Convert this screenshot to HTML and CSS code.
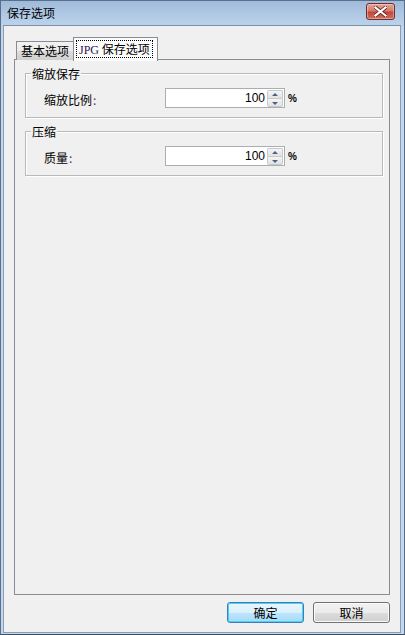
FILE: index.html
```html
<!DOCTYPE html>
<html lang="zh">
<head>
<meta charset="utf-8">
<title>保存选项</title>
<link rel="stylesheet" href="styles.css">
</head>
<body>
<div class="window">
  <div class="titlebar">
    <span class="title">保存选项</span>
    <button class="close" aria-label="关闭">
      <svg width="13" height="11" viewBox="0 0 13 11"><path d="M1.5 1.5 L11.5 9.5 M11.5 1.5 L1.5 9.5" stroke="#5a1a1a" stroke-width="3.6" stroke-linecap="square"/><path d="M1.5 1.5 L11.5 9.5 M11.5 1.5 L1.5 9.5" stroke="#fff" stroke-width="2.2" stroke-linecap="square"/></svg>
    </button>
  </div>
  <div class="body">
    <div class="tabs">
      <div class="tab">基本选项</div>
      <div class="tab active"><span class="focus"><span class="latin">JPG</span> 保存选项</span></div>
    </div>
    <div class="panel">
      <div class="group">
        <span class="legend">缩放保存</span>
        <div class="row">
          <span class="label">缩放比例<span class="colon">:</span></span>
          <div class="spin">
            <span class="value">100</span>
            <span class="arrows"><span class="up"></span><span class="down"></span></span>
          </div>
          <span class="pct">%</span>
        </div>
      </div>
      <div class="group">
        <span class="legend">压缩</span>
        <div class="row">
          <span class="label">质量<span class="colon">:</span></span>
          <div class="spin">
            <span class="value">100</span>
            <span class="arrows"><span class="up"></span><span class="down"></span></span>
          </div>
          <span class="pct">%</span>
        </div>
      </div>
    </div>
    <div class="buttons">
      <button class="btn default">确定</button>
      <button class="btn">取消</button>
    </div>
  </div>
</div>
</body>
</html>
```

FILE: styles.css
```css
* { box-sizing: border-box; }
html, body { margin: 0; padding: 0; }
body {
  width: 405px;
  height: 635px;
  font-family: "Noto Sans CJK SC", "DejaVu Sans", sans-serif;
  font-size: 12px;
  color: #000;
  overflow: hidden;
}
.window {
  width: 405px;
  height: 635px;
  display: flex;
  flex-direction: column;
  background: linear-gradient(to bottom, #9fbbdb 0px, #c3d8ef 30px, #c3d8ef 100%);
  border: 1px solid #5b6e88;
  border-bottom-color: #3b4b60;
  padding: 0 3px 3px 2px;
}
.titlebar {
  height: 24px;
  flex: none;
  display: flex;
  align-items: center;
  justify-content: space-between;
  padding: 0 6px 0 4px;
}
.title {
  font-size: 12px;
  line-height: 14px;
  color: #000;
  margin-top: -1px;
}
.close {
  width: 29px;
  height: 17px;
  margin-top: -3px;
  padding: 0;
  border: 1px solid #6e2c2c;
  border-radius: 3px;
  background: linear-gradient(to bottom, #e8a493 0%, #d47a6a 45%, #c0473a 55%, #d0715e 100%);
  box-shadow: inset 0 0 0 1px rgba(255,255,255,0.35);
  display: flex;
  align-items: center;
  justify-content: center;
}
.close svg { display: block; }
.body {
  flex: 1;
  background: #f0f0f0;
  border: 1px solid #8a9db6;
  border-top-color: #7b8ea8;
  padding: 10px 10px 9px 10px;
  display: flex;
  flex-direction: column;
}
.tabs {
  display: flex;
  align-items: flex-end;
  height: 24px;
  margin-bottom: -1px;
  padding-left: 2px;
  position: relative;
  z-index: 1;
}
.tab {
  height: 19px;
  padding: 0 3px;
  border: 1px solid #898c95;
  border-bottom: none;
  border-right: none;
  background: linear-gradient(to bottom, #f2f2f2 0%, #ebebeb 50%, #dddddd 51%, #cfcfcf 100%);
  line-height: 18px;
  font-size: 12px;
  width: 57px;
  text-align: center;
}
.tab.active {
  height: 24px;
  width: 85px;
  border-right: 1px solid #898c95;
  background: #fcfcfc;
  padding: 2px 2px 0 2px;
  margin-bottom: -1px;
  text-align: left;
}
.focus {
  display: inline-block;
  border: 1px dotted #000;
  padding: 0 2px 0 2px;
  line-height: 16px;
  height: 18px;
  white-space: nowrap;
}
.latin {
  font-family: "Liberation Serif", "DejaVu Serif", serif;
  font-size: 12px;
  color: #30145a;
}
.panel {
  height: 536px;
  border: 1px solid #898c95;
  background: #f0f0f0;
  padding: 13px 6px 0 10px;
  display: flex;
  flex-direction: column;
  gap: 13px;
}
.group {
  height: 45px;
  border: 1px solid #b9b9b9;
  box-shadow: 1px 1px 0 #fff inset, 1px 1px 0 #fff;
  display: flex;
  flex-direction: column;
  align-items: flex-start;
}
.legend {
  display: block;
  margin: -6px 0 0 5px;
  padding: 0 1px;
  background: #f0f0f0;
  font-size: 12px;
  line-height: 12px;
  height: 12px;
}
.row {
  display: flex;
  align-items: center;
  height: 20px;
  margin-top: 8px;
}
.label {
  width: 139px;
  padding-left: 18px;
  line-height: 14px;
  padding-top: 3px;
}
.colon { color: #5a2a7a; margin-left: 1px; }
.spin {
  width: 120px;
  height: 20px;
  border: 1px solid #abadb3;
  background: #fff;
  display: flex;
  align-items: center;
  justify-content: flex-end;
  padding: 1px;
}
.value {
  font-family: "Liberation Sans", "DejaVu Sans", sans-serif;
  font-size: 12px;
  margin-right: 2px;
}
.arrows {
  width: 16px;
  height: 17px;
  display: flex;
  flex-direction: column;
}
.up, .down {
  flex: 1;
  border: 1px solid #c9c9c9;
  background: linear-gradient(to bottom, #f4f4f4, #e2e2e2);
  position: relative;
}
.up { border-bottom: none; border-top-left-radius: 2px; border-top-right-radius: 2px; }
.down { border-bottom-left-radius: 2px; border-bottom-right-radius: 2px; }
.up::after, .down::after {
  content: "";
  position: absolute;
  left: 4px;
  top: 2px;
  border-left: 3px solid transparent;
  border-right: 3px solid transparent;
}
.up::after { border-bottom: 3px solid #4d6185; }
.down::after { border-top: 3px solid #4d6185; top: 3px; }
.pct {
  margin-left: 3px;
  font-family: "Liberation Sans", "DejaVu Sans", sans-serif;
  font-size: 10px;
  font-weight: bold;
}
.buttons {
  display: flex;
  justify-content: flex-end;
  gap: 9px;
  margin-top: 7px;
}
.btn {
  width: 77px;
  height: 21px;
  padding: 0;
  font-family: "Noto Sans CJK SC", sans-serif;
  font-size: 12px;
  color: #000;
  border: 1px solid #707070;
  border-radius: 3px;
  background: linear-gradient(to bottom, #f2f2f2 0%, #ebebeb 50%, #dddddd 51%, #cfcfcf 100%);
  box-shadow: inset 0 0 0 1px #fbfbfb;
}
.btn.default {
  border-color: #3c7fb1;
  background: linear-gradient(to bottom, #eaf6fd 0%, #d9f0fc 50%, #bee6fd 51%, #a7d9f5 100%);
  box-shadow: inset 0 0 0 1px #48d1f9;
}
```
